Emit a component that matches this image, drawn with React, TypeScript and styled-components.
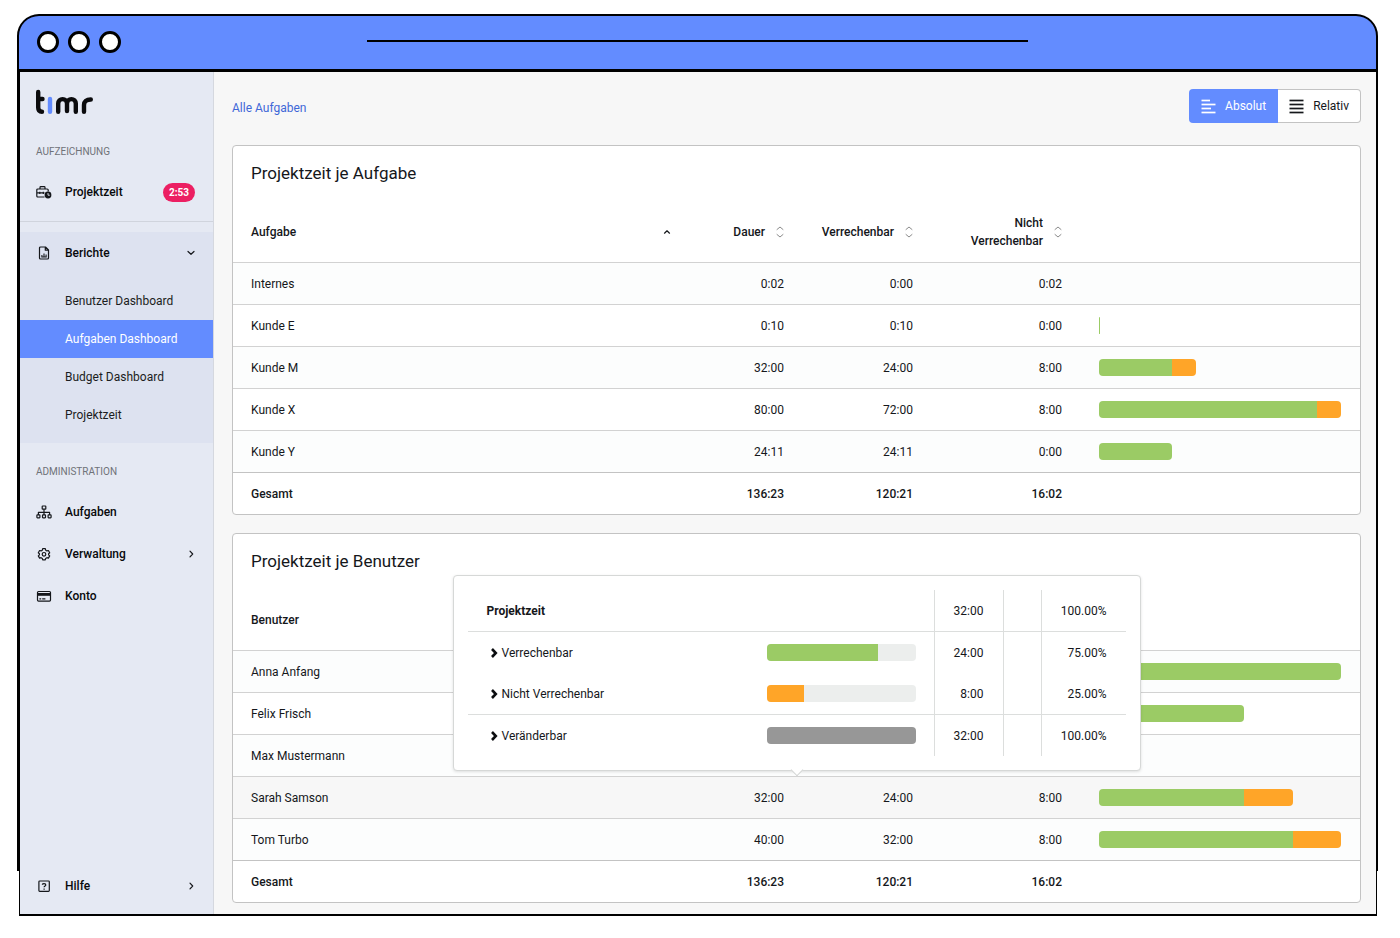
import React from 'react';
import styled, { createGlobalStyle, css } from 'styled-components';

const GlobalStyle = createGlobalStyle`
  * { box-sizing: border-box; }
  body {
    margin: 0;
    background: #fff;
    color: #15171b;
    font-family: Roboto, "Liberation Sans", sans-serif;
    font-size: 12px;
    line-height: 18px;
  }
  button { font: inherit; color: inherit; }
`;

const color = {
  blue: '#638cff',
  green: '#9bcb65',
  orange: '#ffa528',
  gray: '#979797',
  line: '#d2d2d2',
  edge: '#c3c3c3',
  tipLine: '#dcdedd',
};

/* ---------- browser window ---------- */

const Page = styled.div`
  padding: 14px 22px 22px 17px;
`;

const TitleBar = styled.div`
  display: grid;
  grid-template-columns: 1fr 50% 1fr;
  align-items: center;
  height: 58px;
  padding: 0 18px 3px;
  background: ${color.blue};
  border: 2px solid #000;
  border-bottom-width: 3px;
  border-radius: 22px 22px 0 0;
`;

const Dots = styled.div`
  display: flex;
  gap: 9px;
  padding-top: 1px;
`;

const Dot = styled.span`
  width: 22px;
  height: 22px;
  background: #fff;
  border: 3px solid #000;
  border-radius: 50%;
`;

const AddressLine = styled.div`
  height: 2px;
  background: #000;
`;

const Frame = styled.div`
  padding: 0 1px 0 2px;
  background:
    linear-gradient(#000, #000) left top / 3px calc(100% - 45px) no-repeat,
    linear-gradient(#000, #000) right top / 3px calc(100% - 45px) no-repeat;
`;

const Screen = styled.div`
  display: flex;
  background: #f7f7f7;
  border: solid #000;
  border-width: 0 1px 2px 1px;
`;

/* ---------- sidebar ---------- */

const Sidebar = styled.nav`
  flex: 0 0 194px;
  display: flex;
  flex-direction: column;
  padding: 17px 0 7px;
  background: #e5e9f3;
  border-right: 1px solid #d5d8df;
`;

const Logo = styled.svg`
  display: block;
  margin: 0 0 0 15px;
`;

const SectionLabel = styled.div`
  padding: 10px 16px;
  font-size: 10px;
  color: #6f7278;
  text-transform: uppercase;
`;

const TopLabel = styled(SectionLabel)`
  padding-top: 28px;
`;

const AdminLabel = styled(SectionLabel)`
  padding-top: 20px;
`;

const NavItem = styled.a`
  display: grid;
  grid-template-columns: 16px 1fr auto;
  column-gap: 13px;
  align-items: center;
  height: 42px;
  padding: 0 18px 0 16px;
  font-weight: 500;
  color: #08090b;
  text-decoration: none;
`;

const Badge = styled.span`
  padding: 0 6px;
  font-size: 10px;
  font-weight: 700;
  line-height: 19px;
  color: #fff;
  background: #ec1f62;
  border-radius: 10px;
`;

const NavRule = styled.hr`
  width: 100%;
  height: 1px;
  margin: 8px 0 10px;
  border: 0;
  background: #d0d4dd;
`;

const NavGroup = styled.div`
  padding-bottom: 9px;
  background: #dde2f0;
`;

const SubList = styled.ul`
  margin: 0;
  padding: 8px 0 0;
  list-style: none;
`;

const SubLink = styled.a<{ $active?: boolean }>`
  display: block;
  padding: 10px 16px 10px 45px;
  color: ${(p) => (p.$active ? '#fff' : '#1b1d21')};
  background: ${(p) => (p.$active ? color.blue : 'transparent')};
  text-decoration: none;
`;

const NavBottom = styled.div`
  margin-top: auto;
`;

/* ---------- content ---------- */

const Content = styled.main`
  flex: 1;
  min-width: 0;
  display: flex;
  flex-direction: column;
  gap: 18px;
  padding: 17px 15px 11px 18px;
`;

const TopBar = styled.div`
  display: flex;
  align-items: center;
  justify-content: space-between;
  margin-bottom: 4px;
`;

const Crumb = styled.a`
  padding-top: 3px;
  color: #3f68d8;
  text-decoration: none;
`;

const Toggle = styled.div`
  display: flex;
`;

const ToggleButton = styled.button<{ $active?: boolean }>`
  display: flex;
  align-items: center;
  gap: 9px;
  height: 34px;
  padding: 0 11px;
  background: #fff;
  border: 1px solid ${color.edge};
  border-left: 0;
  border-radius: 0 4px 4px 0;
  ${(p) =>
    p.$active &&
    css`
      padding: 0 12px;
      color: #fff;
      background: ${color.blue};
      border: 0;
      border-radius: 4px 0 0 4px;
    `}
`;

const Card = styled.section`
  background: #fff;
  border: 1px solid ${color.edge};
  border-radius: 4px;
`;

const CardTitle = styled.h2`
  margin: 0;
  padding: 15px 18px 13px;
  font-size: 17px;
  font-weight: 400;
  line-height: 24px;
`;

const DataTable = styled.table`
  width: 100%;
  table-layout: fixed;
  border-collapse: separate;
  border-spacing: 0;
`;

const HeadCell = styled.th`
  height: 64px;
  padding: 4px 10px 0;
  font-weight: 500;
  text-align: right;

  &:first-child {
    padding: 4px 14px 0 18px;
  }
`;

const SortButton = styled.button`
  display: flex;
  align-items: center;
  justify-content: flex-end;
  gap: 11px;
  width: 100%;
  padding: 0;
  border: 0;
  background: none;
  font-weight: 500;
  text-align: right;

  ${HeadCell}:first-child & {
    justify-content: space-between;
  }
`;

const Row = styled.tr<{ $hovered?: boolean }>`
  position: relative;
  background: #fff;

  &:nth-child(odd) {
    background: #fcfdfd;
  }
  ${(p) =>
    p.$hovered &&
    css`
      && {
        background: #f7f7f7;
      }
    `}
`;

const Cell = styled.td`
  height: 42px;
  padding: 0 10px;
  text-align: right;
  border-top: 1px solid ${color.line};

  &:last-child {
    padding: 0 19px 0 27px;
  }
`;

const NameCell = styled.th`
  height: 42px;
  padding: 0 18px;
  font-weight: 400;
  text-align: left;
  border-top: 1px solid ${color.line};
`;

const TotalRow = styled.tr`
  ${Cell}, ${NameCell} {
    font-weight: 500;
    border-top-color: ${color.edge};
  }
`;

const Bar = styled.div`
  display: flex;
  height: 17px;
  overflow: hidden;
  border-radius: 4px;
`;

const Track = styled(Bar)`
  background: #eceeed;
`;

const Segment = styled.span<{ $tone: 'green' | 'orange' | 'gray' }>`
  background: ${(p) => color[p.$tone]};
`;

/* ---------- tooltip ---------- */

const Tooltip = styled.div`
  position: absolute;
  z-index: 1;
  bottom: calc(100% + 5px);
  left: 50%;
  width: 688px;
  padding: 14px;
  background: #fff;
  border: 1px solid #d6d8d7;
  border-radius: 4px;
  box-shadow: 0 1px 3px rgba(0, 0, 0, 0.12);
  transform: translateX(-50%);

  &::after {
    content: '';
    position: absolute;
    top: 100%;
    left: 50%;
    width: 8px;
    height: 8px;
    background: #fff;
    border: solid #d0d2d1;
    border-width: 0 1px 1px 0;
    transform: translate(-50%, -50%) rotate(45deg);
  }
`;

const TipTable = styled.table`
  width: 100%;
  table-layout: fixed;
  border-collapse: separate;
  border-spacing: 0;
`;

const TipRow = styled.tr<{ $ruled?: boolean }>`
  height: 41px;
  ${(p) =>
    p.$ruled &&
    css`
      height: 42px;

      & > * {
        border-bottom: 1px solid ${color.tipLine};
      }
    `}
`;

const TipName = styled.th<{ $strong?: boolean }>`
  padding: 0 ${(p) => (p.$strong ? '19px' : '22px')};
  font-weight: ${(p) => (p.$strong ? 700 : 400)};
  text-align: left;
`;

const TipLabel = styled.span`
  display: flex;
  align-items: center;
  gap: 4px;
`;

const TipBarCell = styled.td`
  padding: 0 18px 0 0;
`;

const TipValue = styled.td`
  padding: 0 19px 0 12px;
  text-align: right;
  border-left: 1px solid ${color.tipLine};
`;

/* ---------- icons ---------- */

const Icon = ({ children }: { children: React.ReactNode }) => (
  <svg width="16" height="16" viewBox="0 0 16 16" fill="none" stroke="#15171b" strokeWidth="1.2" strokeLinejoin="round" aria-hidden="true">
    {children}
  </svg>
);

const BriefcaseClock = () => (
  <Icon>
    <path d="M8.500 13H1.800A1 1 0 0 1 0.800 12V6A1 1 0 0 1 1.800 5H11.200A1 1 0 0 1 12.200 6V7.500M4 5V3.500A0.800 0.800 0 0 1 4.800 2.700H8.200A0.800 0.800 0 0 1 9 3.500V5M0.800 8.800H8.500M3.800 7.800V10M7.300 7.800V10" />
    <circle cx="12" cy="11" r="3.400" fill="#15171b" stroke="none" />
    <path d="M12 9V11.200H13.800" stroke="#e5e9f3" strokeWidth="0.900" />
  </Icon>
);

const FileChart = () => (
  <Icon>
    <path d="M9.500 2H4.500A1 1 0 0 0 3.500 3V13A1 1 0 0 0 4.500 14H11.500A1 1 0 0 0 12.500 13V5ZM9.300 2V5.200H12.500" />
    <path d="M5.900 12V10M8 12V8.500M10.100 12V9.500M5.300 12H10.700" strokeWidth="1.100" />
  </Icon>
);

const Sitemap = () => (
  <Icon>
    <rect x="6.200" y="2" width="3.600" height="3.200" rx="0.500" />
    <rect x="0.900" y="10.900" width="3" height="2.900" rx="0.500" />
    <rect x="6.500" y="10.900" width="3" height="2.900" rx="0.500" />
    <rect x="12.100" y="10.900" width="3" height="2.900" rx="0.500" />
    <path d="M8 5.200V10.900M2.400 10.900V8.300H13.600V10.900" />
  </Icon>
);

const Gear = () => (
  <Icon>
    <path d="M6.700 2.700H9.300L9.700 4.200L10.900 4.900L12.400 4.500L13.700 6.700L12.600 7.700V8.900L13.700 9.900L12.400 12.100L10.900 11.700L9.700 12.400L9.300 13.900H6.700L6.300 12.400L5.100 11.700L3.600 12.100L2.300 9.900L3.400 8.900V7.700L2.300 6.700L3.600 4.500L5.100 4.900L6.300 4.200Z" />
    <circle cx="8" cy="8.300" r="1.800" />
  </Icon>
);

const CreditCard = () => (
  <Icon>
    <rect x="1.500" y="3.500" width="13" height="9.600" rx="1" />
    <path d="M1.500 6.400H14.500" strokeWidth="2.800" />
    <path d="M3.400 10.800H5.200M6.200 10.800H9.400" />
  </Icon>
);

const HelpSquare = () => (
  <Icon>
    <rect x="2.900" y="3" width="10.400" height="10.400" rx="0.800" />
    <path d="M6.400 6.700C6.400 5.200 9.800 5.200 9.800 6.900C9.800 8 8.100 7.900 8.100 9.300" />
    <path d="M8.100 10.500V11.700" />
  </Icon>
);

const Chevron = ({ d }: { d: string }) => (
  <svg width="8" height="8" viewBox="0 0 8 8" fill="none" stroke="#15171b" strokeWidth="1.200" strokeLinecap="round" strokeLinejoin="round" aria-hidden="true">
    <path d={d} />
  </svg>
);

const DOWN = 'M1 2.500L4 5.300L7 2.500';
const RIGHT = 'M3 1.200L5.700 4L3 6.800';
const UP = 'M1.500 5.200L4 2.800L6.500 5.200';

const SortIcon = () => (
  <svg width="8" height="12" viewBox="0 0 8 12" fill="none" stroke="#8a8a8a" strokeLinecap="round" strokeLinejoin="round" aria-hidden="true">
    <path d="M1 3.500L4 1L7 3.500M1 8.500L4 11L7 8.500" />
  </svg>
);

const BoldChevron = () => (
  <svg width="8" height="10" viewBox="0 0 8 10" fill="none" stroke="#0b0d10" strokeWidth="2.600" aria-hidden="true">
    <path d="M2 1L5.800 5L2 9" />
  </svg>
);

const Lines = ({ widths }: { widths: number[] }) => (
  <svg width="15" height="15" viewBox="0 0 15 15" stroke="currentColor" strokeWidth="1.700" aria-hidden="true">
    {widths.map((w, i) => (
      <path key={i} d={`M0.500 ${1.500 + i * 4}H${w}`} />
    ))}
  </svg>
);

/* ---------- data ---------- */

type Entry = { name: string; total: string; billable: string; other: string; green: number; orange: number; hovered?: boolean };

const tasks: Entry[] = [
  { name: 'Internes', total: '0:02', billable: '0:00', other: '0:02', green: 0, orange: 0 },
  { name: 'Kunde E', total: '0:10', billable: '0:10', other: '0:00', green: 0.3, orange: 0 },
  { name: 'Kunde M', total: '32:00', billable: '24:00', other: '8:00', green: 30, orange: 10 },
  { name: 'Kunde X', total: '80:00', billable: '72:00', other: '8:00', green: 90, orange: 10 },
  { name: 'Kunde Y', total: '24:11', billable: '24:11', other: '0:00', green: 30.2, orange: 0 },
];

const users: Entry[] = [
  { name: 'Anna Anfang', total: '40:00', billable: '40:00', other: '0:00', green: 100, orange: 0 },
  { name: 'Felix Frisch', total: '24:00', billable: '24:00', other: '0:00', green: 60, orange: 0 },
  { name: 'Max Mustermann', total: '0:23', billable: '0:21', other: '0:02', green: 0, orange: 0 },
  { name: 'Sarah Samson', total: '32:00', billable: '24:00', other: '8:00', green: 60, orange: 20, hovered: true },
  { name: 'Tom Turbo', total: '40:00', billable: '32:00', other: '8:00', green: 80, orange: 20 },
];

const details = [
  { name: 'Verrechenbar', tone: 'green' as const, share: 75, time: '24:00', percent: '75.00%' },
  { name: 'Nicht Verrechenbar', tone: 'orange' as const, share: 25, time: '8:00', percent: '25.00%', ruled: true },
  { name: 'Veränderbar', tone: 'gray' as const, share: 100, time: '32:00', percent: '100.00%' },
];

const DetailTip = () => (
  <Tooltip role="tooltip">
    <TipTable>
      <colgroup>
        <col />
        <col style={{ width: 167 }} />
        <col style={{ width: 69 }} />
        <col style={{ width: 38 }} />
        <col style={{ width: 85 }} />
      </colgroup>
      <tbody>
        <TipRow $ruled>
          <TipName scope="row" $strong>Projektzeit</TipName>
          <TipBarCell />
          <TipValue>32:00</TipValue>
          <TipValue />
          <TipValue>100.00%</TipValue>
        </TipRow>
        {details.map((d) => (
          <TipRow key={d.name} $ruled={d.ruled}>
            <TipName scope="row">
              <TipLabel>
                <BoldChevron />
                {d.name}
              </TipLabel>
            </TipName>
            <TipBarCell>
              <Track>
                <Segment $tone={d.tone} style={{ width: `${d.share}%` }} />
              </Track>
            </TipBarCell>
            <TipValue>{d.time}</TipValue>
            <TipValue />
            <TipValue>{d.percent}</TipValue>
          </TipRow>
        ))}
      </tbody>
    </TipTable>
  </Tooltip>
);

const StackedBar = ({ entry }: { entry: Entry }) => {
  const sum = entry.green + entry.orange;
  if (!sum) return null;
  return (
    <Bar style={{ width: `${sum}%` }}>
      <Segment $tone="green" style={{ width: `${(entry.green / sum) * 100}%` }} />
      <Segment $tone="orange" style={{ width: `${(entry.orange / sum) * 100}%` }} />
    </Bar>
  );
};

const ReportCard = ({ title, label, rows }: { title: string; label: string; rows: Entry[] }) => (
  <Card>
    <CardTitle>{title}</CardTitle>
    <DataTable>
      <colgroup>
        <col />
        <col style={{ width: 109 }} />
        <col style={{ width: 129 }} />
        <col style={{ width: 149 }} />
        <col style={{ width: 288 }} />
      </colgroup>
      <thead>
        <tr>
          <HeadCell scope="col">
            <SortButton>
              {label}
              <Chevron d={UP} />
            </SortButton>
          </HeadCell>
          {['Dauer', 'Verrechenbar'].map((name) => (
            <HeadCell scope="col" key={name}>
              <SortButton>
                {name}
                <SortIcon />
              </SortButton>
            </HeadCell>
          ))}
          <HeadCell scope="col">
            <SortButton>
              <span>
                Nicht
                <br />
                Verrechenbar
              </span>
              <SortIcon />
            </SortButton>
          </HeadCell>
          <HeadCell as="td" />
        </tr>
      </thead>
      <tbody>
        {rows.map((r) => (
          <Row key={r.name} $hovered={r.hovered}>
            <NameCell scope="row">{r.name}</NameCell>
            <Cell>{r.total}</Cell>
            <Cell>{r.billable}</Cell>
            <Cell>{r.other}</Cell>
            <Cell>
              <StackedBar entry={r} />
              {r.hovered && <DetailTip />}
            </Cell>
          </Row>
        ))}
      </tbody>
      <tfoot>
        <TotalRow>
          <NameCell scope="row">Gesamt</NameCell>
          <Cell>136:23</Cell>
          <Cell>120:21</Cell>
          <Cell>16:02</Cell>
          <Cell />
        </TotalRow>
      </tfoot>
    </DataTable>
  </Card>
);

export default function App() {
  return (
    <Page>
      <GlobalStyle />
      <TitleBar>
        <Dots>
          <Dot />
          <Dot />
          <Dot />
        </Dots>
        <AddressLine />
      </TitleBar>
      <Frame>
        <Screen>
          <Sidebar>
            <Logo width="60" height="26" viewBox="0 0 60 26" fill="none" stroke="#0b0b0d" strokeWidth="4.400" strokeLinecap="round" strokeLinejoin="round" role="img" aria-label="timr">
              <path d="M3.200 3V18.500Q3.200 22.800 7 22.800M3.200 10H7.500" />
              <path d="M15 10V22.800" stroke={color.blue} />
              <path d="M23.200 22.800V14.500A4.400 4.400 0 0 1 32 14.500V22M32 14.500A4.400 4.400 0 0 1 40.800 14.500V22.800" />
              <path d="M49 22.800V16Q49 10.500 55.800 10.500" />
            </Logo>
            <TopLabel>Aufzeichnung</TopLabel>
            <NavItem href="#projektzeit">
              <BriefcaseClock />
              Projektzeit
              <Badge>2:53</Badge>
            </NavItem>
            <NavRule />
            <NavGroup>
              <NavItem href="#berichte">
                <FileChart />
                Berichte
                <Chevron d={DOWN} />
              </NavItem>
              <SubList>
                <li><SubLink href="#benutzer">Benutzer Dashboard</SubLink></li>
                <li><SubLink href="#aufgaben" $active aria-current="page">Aufgaben Dashboard</SubLink></li>
                <li><SubLink href="#budget">Budget Dashboard</SubLink></li>
                <li><SubLink href="#zeit">Projektzeit</SubLink></li>
              </SubList>
            </NavGroup>
            <AdminLabel>Administration</AdminLabel>
            <NavItem href="#aufgabenliste">
              <Sitemap />
              Aufgaben
            </NavItem>
            <NavItem href="#verwaltung">
              <Gear />
              Verwaltung
              <Chevron d={RIGHT} />
            </NavItem>
            <NavItem href="#konto">
              <CreditCard />
              Konto
            </NavItem>
            <NavBottom>
              <NavItem href="#hilfe">
                <HelpSquare />
                Hilfe
                <Chevron d={RIGHT} />
              </NavItem>
            </NavBottom>
          </Sidebar>
          <Content>
            <TopBar>
              <Crumb href="#alle">Alle Aufgaben</Crumb>
              <Toggle role="group" aria-label="Darstellung">
                <ToggleButton $active aria-pressed="true">
                  <Lines widths={[9, 14.5, 10, 14.5]} />
                  Absolut
                </ToggleButton>
                <ToggleButton aria-pressed="false">
                  <Lines widths={[14.5, 14.5, 14.5, 14.5]} />
                  Relativ
                </ToggleButton>
              </Toggle>
            </TopBar>
            <ReportCard title="Projektzeit je Aufgabe" label="Aufgabe" rows={tasks} />
            <ReportCard title="Projektzeit je Benutzer" label="Benutzer" rows={users} />
          </Content>
        </Screen>
      </Frame>
    </Page>
  );
}
